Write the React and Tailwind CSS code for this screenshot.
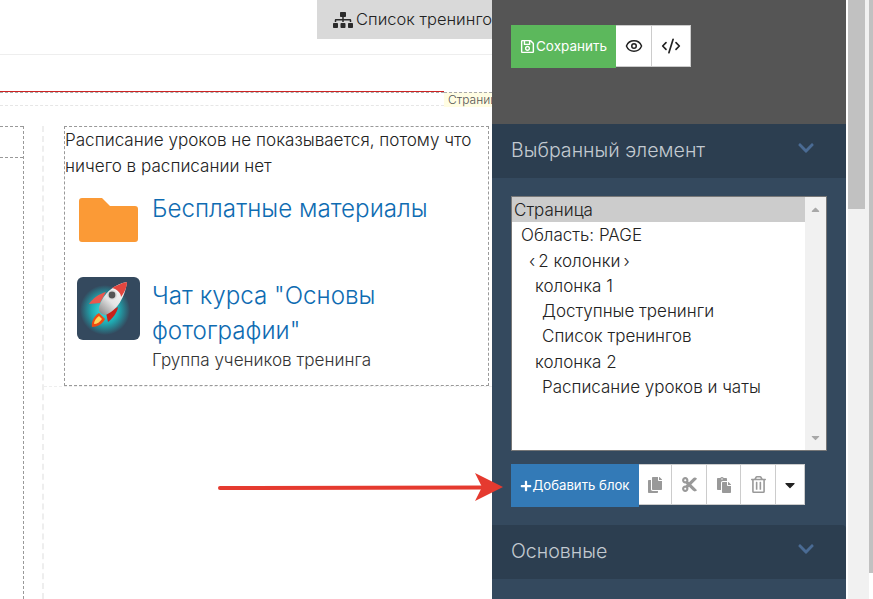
import { CodeXml, Eye } from "lucide-react";
import { FaSitemap, FaRegSave, FaCopy, FaCut, FaPaste, FaRegTrashAlt, FaCaretDown, FaChevronDown, FaCaretUp, FaPlus } from "react-icons/fa";

const TREE = [
    { label: "Страница", pad: "pl-[2px]", active: true },
    { label: "Область: PAGE", pad: "pl-[9px]" },
    { label: "‹\u20092 колонки\u2009›", pad: "pl-[17px]" },
    { label: "колонка 1", pad: "pl-[23px]" },
    { label: "Доступные тренинги", pad: "pl-[30px]" },
    { label: "Список тренингов", pad: "pl-[30px]" },
    { label: "колонка 2", pad: "pl-[23px]" },
    { label: "Расписание уроков и чаты", pad: "pl-[30px]" },
];

function Rocket() {
    return (
        <svg viewBox="0 0 63 63" className="w-[63px] h-[63px] shrink-0 rounded-[6px]">
            <defs>
                <radialGradient id="glow" cx="0.5" cy="0.5" r="0.5">
                    <stop offset="0" stopColor="#35e8e8" />
                    <stop offset="0.55" stopColor="#1fa8b0" />
                    <stop offset="1" stopColor="#34495e" />
                </radialGradient>
                <linearGradient id="body" x1="0.9" y1="0" x2="0.1" y2="1">
                    <stop offset="0" stopColor="#ffffff" />
                    <stop offset="0.6" stopColor="#e4e4e4" />
                    <stop offset="1" stopColor="#8a8a8a" />
                </linearGradient>
            </defs>
            <rect width="63" height="63" fill="#34495e" />
            <circle cx="28" cy="33" r="25" fill="url(#glow)" />
            <path d="M22 36L28 42C26 47 20 50 15 50C14 45 17 39 22 36z" fill="#ee4a12" />
            <path d="M22 39L25 42C23 45 20 47 17 47C17 44 19 41 22 39z" fill="#ffd75a" />
            <path d="M29 15C22 17 16 21 12 27L23 26z" fill="#e9574e" />
            <path d="M41 30C40 36 36 41 31 45L29 36z" fill="#c9201a" />
            <path d="M50 5C38 7 26 16 22 30C21 34 24 38 28 38C40 34 48 20 50 5z" fill="url(#body)" />
            <path d="M50 5C44 6 39 9 35 11C40 12 44 16 44 20C48 15 50 9 50 5z" fill="#e2463f" />
            <circle cx="35" cy="18" r="5" fill="#dcdcdc" />
            <circle cx="35" cy="18" r="3.4" fill="#555" />
        </svg>
    );
}

function ToolButton({ children, className }) {
    return (
        <button className={`h-full flex items-center justify-center border-y border-r border-[#ccc] bg-white ${className}`}>
            {children}
        </button>
    );
}

function SectionHeader({ title, className }) {
    return (
        <div className={`h-[54px] shrink-0 bg-[#2c3e50] pl-[19px] pr-[31px] flex items-center justify-between ${className}`}>
            <span className="text-[19.6px] text-[#c3cad1]">{title}</span>
            <FaChevronDown className="text-[#4a6b94] text-[18px] -mt-[7px]" />
        </div>
    );
}

export default function App() {
    return (
        <div className="relative w-[873px] h-[599px] overflow-hidden flex bg-white [font-family:Inter,sans-serif] font-light text-[#222]">
            {/* Canvas */}
            <div className="w-[492px] shrink-0 flex flex-col">
                <div className="h-[55px] shrink-0 border-b border-[#eee] flex justify-end items-start">
                    <div className="w-[175px] h-[39px] bg-[#d9d9d9] pl-[16px] flex items-center gap-[3px] overflow-hidden whitespace-nowrap text-[16.5px]">
                        <FaSitemap className="text-[20px] shrink-0 text-[#2b2b2b]" />
                        Список тренингов
                    </div>
                </div>

                <div className="mt-[36px] h-[15px] shrink-0 flex">
                    <div className="flex-1 border-t border-[#c22]">
                        <div className="h-[14px] border-t border-b border-dashed border-t-[#aaa] border-b-[#e6e6e6]" />
                    </div>
                    <div className="w-[48px] h-[15px] mt-[1px] bg-[#fffde3] border-t border-dashed border-[#aaa] pl-[4px] text-[12px] leading-[14px] text-[#555] overflow-hidden">
                        Страница
                    </div>
                </div>

                <div className="mt-[20px] flex-1 flex">
                    {/* Column 1 */}
                    <div className="w-[24px] shrink-0 border-r border-dashed border-[#999]">
                        <div className="h-[32px] border-t border-b border-dashed border-[#999]" />
                    </div>
                    <div className="w-[20px] shrink-0 border-r-2 border-dashed border-[#eee]" />

                    {/* Column 2 */}
                    <div className="flex-1">
                        <div className="border-b border-dashed border-[#eee] pl-[20px] pr-[3px]">
                            <div className="h-[260px] border border-dashed border-[#999]">
                                <p className="text-[17.1px] leading-[26px]">
                                    Расписание уроков не показывается, потому что ничего в расписании нет
                                </p>
                                <div className="mt-[19px] pl-[14px] flex gap-[14px]">
                                    <svg viewBox="0 0 59 44" className="w-[59px] h-[44px] mb-[2px] shrink-0">
                                        <path d="M0 3a3 3 0 0 1 3-3h20l8 8h25a3 3 0 0 1 3 3v30a3 3 0 0 1-3 3H3a3 3 0 0 1-3-3z" fill="#fb9a36" />
                                    </svg>
                                    <a className="text-[24.2px] leading-[22px] text-[#0f6cb2]">Бесплатные материалы</a>
                                </div>
                                <div className="mt-[33px] pl-[12px] flex gap-[12px]">
                                    <Rocket />
                                    <div className="pt-[1px]">
                                        <a className="block text-[24.2px] leading-[35px] text-[#0f6cb2]">Чат курса "Основы фотографии"</a>
                                        <p className="text-[17.1px] leading-[23px] text-[#333]">Группа учеников тренинга</p>
                                    </div>
                                </div>
                            </div>
                        </div>
                    </div>
                </div>
            </div>

            {/* Right panel */}
            <div className="w-[354px] shrink-0 flex flex-col bg-[#34495e]">
                <div className="h-[124px] shrink-0 bg-[#555] pl-[19px] pt-[25px]">
                    <div className="h-[43px] flex items-start">
                        <button className="w-[105px] h-[43px] bg-[#5cb85c] text-white text-[13.5px] font-normal flex items-center justify-center gap-[1px] whitespace-nowrap">
                            <FaRegSave className="text-[15px]" />
                            Сохранить
                        </button>
                        <div className="h-[42px] flex">
                            <ToolButton className="w-[36px]"><Eye size={18} strokeWidth={2} className="text-[#222]" /></ToolButton>
                            <ToolButton className="w-[39px]"><CodeXml size={20} strokeWidth={2} className="text-[#222]" /></ToolButton>
                        </div>
                    </div>
                </div>

                <SectionHeader title="Выбранный элемент" />

                <div className="h-[347px] shrink-0 pl-[19px] pt-[18px]">
                    <div className="w-[316px] h-[255px] border border-[#777] bg-white flex">
                        <div className="flex-1">
                            {TREE.map((row) => (
                                <div
                                    key={row.label}
                                    className={`h-[25.3px] leading-[26px] text-[17px] whitespace-nowrap ${row.pad} ${row.active ? "bg-[#ccc]" : ""}`}
                                >
                                    {row.label}
                                </div>
                            ))}
                        </div>
                        <div className="w-[21px] bg-[#f1f1f1] flex flex-col items-center justify-between text-[#a8a8a8] text-[13px] py-[6px]">
                            <FaCaretUp />
                            <FaCaretDown />
                        </div>
                    </div>

                    <div className="mt-[13px] h-[43px] flex items-start">
                        <button className="w-[128px] h-[43px] bg-[#337ab7] text-white text-[13.2px] font-normal flex items-center justify-center whitespace-nowrap">
                            <FaPlus className="text-[12px]" />
                            Добавить блок
                        </button>
                        <div className="h-[41px] flex text-[#999] text-[16px]">
                            <ToolButton className="w-[33px]"><FaCopy /></ToolButton>
                            <ToolButton className="w-[35px]"><FaCut className="text-[17px]" /></ToolButton>
                            <ToolButton className="w-[34px]"><FaPaste /></ToolButton>
                            <ToolButton className="w-[35px]"><FaRegTrashAlt className="text-[17px]" /></ToolButton>
                            <ToolButton className="w-[29px] text-[#222]"><FaCaretDown /></ToolButton>
                        </div>
                    </div>
                </div>

                <SectionHeader title="Основные" className="rounded-tr-[4px]" />
            </div>

            {/* Page scrollbars */}
            <div className="flex-1 flex bg-white pl-[2px]">
                <div className="w-[17px] bg-[#f1f1f1]">
                    <div className="h-[209px] bg-[#c1c1c1]" />
                </div>
                <div className="w-[4px] bg-[#f1f1f1]" />
                <div className="flex-1">
                    <div className="h-[573px] bg-[#c1c1c1]" />
                </div>
            </div>

            {/* Annotation arrow */}
            <svg viewBox="0 0 873 599" className="absolute inset-0 w-[873px] h-[599px] pointer-events-none">
                <line x1="220" y1="488" x2="485" y2="487.5" stroke="#e53a2f" strokeWidth="4" strokeLinecap="round" />
                <path d="M475 473L503 487L475 501L482 487z" fill="#e53a2f" />
            </svg>
        </div>
    );
}
